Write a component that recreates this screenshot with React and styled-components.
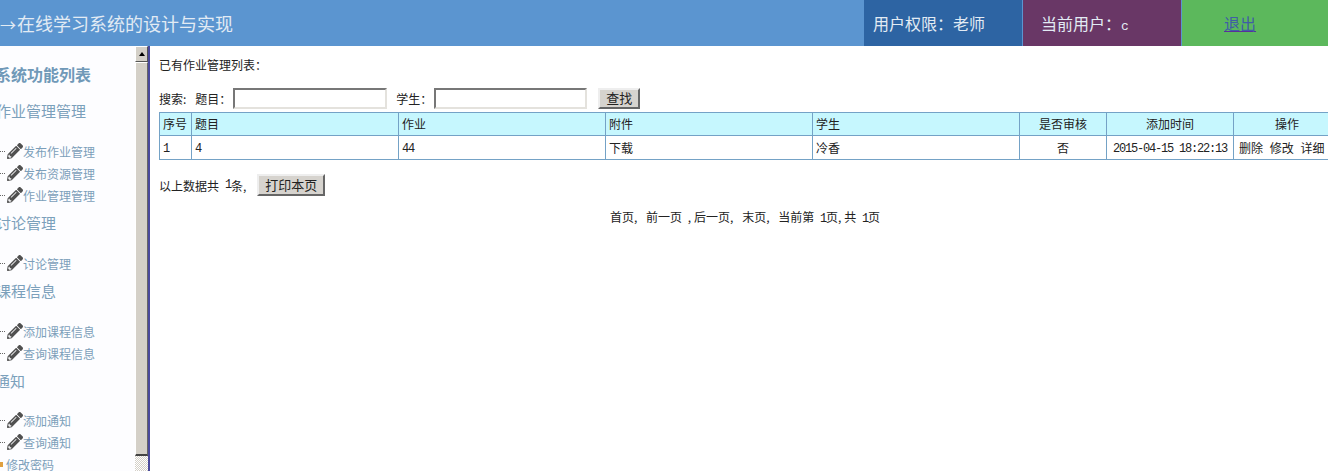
import styled, { createGlobalStyle } from 'styled-components';
import { FaPencilAlt } from 'react-icons/fa';

const CJK = '"Noto Sans CJK SC", "Liberation Sans", sans-serif';

const Global = createGlobalStyle`
   html, body {
      margin: 0;
      padding: 0;
      height: 100%;
      overflow: hidden;
      background: #fff;
      font-family: ${CJK};
   }
`;

const Page = styled.div`
   width: 1328px;
   height: 471px;
   overflow: hidden;
   display: flex;
   flex-direction: column;
`;

const Header = styled.header`
   height: 46px;
   flex: none;
   display: flex;
   background: #5b95d0;
   color: #e2ebf4;
   font-size: 16px;
   line-height: 46px;
`;

const Title = styled.div`
   flex: 1;
   font-size: 18px;
   white-space: nowrap;
`;

const Arrow = styled.span`
   display: inline-block;
   width: 17px;
   font-size: 16px;
`;

const HeaderCell = styled.div`
   width: ${props => props.width}px;
   background: ${props => props.bg};
   padding-left: ${props => props.pad}px;
   box-sizing: border-box;
   margin-left: ${props => props.gap || 0}px;
   white-space: nowrap;
`;

const Logout = styled.a`
   color: #3f5ea6;
   text-decoration: underline;
   text-decoration-color: #5a2f9a;
`;

const UserName = styled.span`
   font-family: "Liberation Mono", monospace;
   font-size: 13px;
`;

const Body = styled.div`
   flex: 1;
   display: flex;
   min-height: 0;
`;

const Side = styled.aside`
   width: 135px;
   flex: none;
   overflow: hidden;
   background: #fdfdff;
   color: #7c9fba;
   font-size: 12px;
   padding-top: 17px;
   box-sizing: border-box;
`;

const SideTitle = styled.div`
   font-size: 16px;
   line-height: 22px;
   font-weight: 700;
   margin-left: -5px;
   color: #7099b8;
   white-space: nowrap;
`;

const SideHead = styled.div`
   font-size: 15px;
   line-height: 22px;
   margin: ${props => props.top}px 0 ${props => props.bottom || 18}px ${props => props.left}px;
   color: #7ba0bb;
   white-space: nowrap;
`;

const SideItem = styled.div`
   height: 22px;
   display: flex;
   align-items: center;
   white-space: nowrap;
`;

const TreeDots = styled.span`
   width: 5px;
   margin-right: 2px;
   border-top: 1px dotted #666;
`;

const Pencil = styled(FaPencilAlt)`
   width: 16px;
   height: 16px;
   color: #505050;
   flex: none;
`;

const KeyMark = styled.span`
   width: 3px;
   height: 5px;
   margin-right: 3px;
   background: #e0a040;
`;

const Scrollbar = styled.div`
   width: 13px;
   flex: none;
   display: flex;
   flex-direction: column;
   background: #d4d0c8;
   border-right: 2px solid #4a4a9c;
`;

const ScrollButton = styled.div`
   height: 16px;
   display: flex;
   align-items: center;
   justify-content: center;
   background: #d4d0c8;
   border-top: 1px solid #fff;
   border-left: 1px solid #fff;
   border-right: 1px solid #555;
   border-bottom: 1px solid #555;
   box-sizing: border-box;
`;

const ScrollArrow = styled.span`
   width: 0;
   height: 0;
   border-left: 3px solid transparent;
   border-right: 3px solid transparent;
   border-bottom: 4px solid #000;
`;

const ScrollThumb = styled.div`
   height: 394px;
   background: #d4d0c8;
   border-top: 1px solid #fff;
   border-left: 1px solid #fff;
   border-right: 1px solid #666;
   border-bottom: 2px solid #444;
   box-sizing: border-box;
`;

const ScrollTrack = styled.div`
   flex: 1;
   background: repeating-conic-gradient(#fff 0 25%, #d4d0c8 0 50%) 0 0 / 2px 2px;
`;

const Main = styled.main`
   width: 1181px;
   flex: none;
   padding-left: 9px;
   font-size: 12px;
   color: #222;
`;

const Heading = styled.div`
   height: 17px;
   line-height: 17px;
   margin-top: 10px;
`;

const SearchRow = styled.form`
   height: 21px;
   margin: 15px 0 3px;
   display: flex;
   align-items: center;
   white-space: nowrap;
`;

const Label = styled.span`
   margin-right: ${props => props.right || 0}px;
   margin-left: ${props => props.left || 0}px;
`;

const Field = styled.input`
   width: ${props => props.width}px;
   height: 21px;
   box-sizing: border-box;
   padding: 0;
   background: #fff;
   border: 2px solid;
   border-color: #777 #e4e2dd #e4e2dd #777;
`;

const PlainButton = styled.button`
   width: ${props => props.width}px;
   height: ${props => props.height || 21}px;
   margin-left: ${props => props.left}px;
   padding: 0 0 2px;
   font-family: ${CJK};
   font-size: 13px;
   line-height: 13px;
   color: #222;
   background: #d6d3ce;
   border: 2px solid;
   border-color: #eee #666 #666 #eee;
`;

const Table = styled.table`
   width: 1181px;
   table-layout: fixed;
   border-collapse: collapse;
   font-size: 12px;

   td, th {
      height: 24px;
      padding: 0 0 1px 3px;
      box-sizing: border-box;
      border: 1px solid #74a2c6;
      font-weight: normal;
      text-align: left;
      white-space: nowrap;
      overflow: hidden;
   }

   th {
      height: 23px;
      background: #c6f7fe;
   }

   .center {
      text-align: center;
      padding: 0 0 1px;
   }

   .actions {
      padding-left: 5px;
      word-spacing: 4px;
   }
`;

const Latin = styled.span`
   font-family: "Liberation Mono", monospace;
   letter-spacing: -1.2px;
`;

const Comma = styled.span`
   margin-right: 3px;
`;

const Summary = styled.div`
   height: 22px;
   margin-top: 14px;
   display: flex;
   align-items: center;
   white-space: nowrap;
`;

const Pager = styled.div`
   margin: 12px 0 0 -9px;
   text-align: center;
   line-height: 17px;
   white-space: pre;
   word-spacing: 3px;
`;

const columns = [32, 207, 207, 207, 207, 87, 127, 107];

const Item = ({ children }) => (
   <SideItem>
      <TreeDots />
      <Pencil />
      {children}
   </SideItem>
);

const App = () => {
   return (
      <Page>
         <Global />
         <Header>
            <Title><Arrow>→</Arrow>在线学习系统的设计与实现</Title>
            <HeaderCell width={158} bg="#2d64a3" pad={9}>用户权限：老师</HeaderCell>
            <HeaderCell width={158} bg="#693766" pad={18} gap={1}>当前用户：<UserName>c</UserName></HeaderCell>
            <HeaderCell width={146} bg="#5cb85c" pad={42} gap={1}><Logout href="#">退出</Logout></HeaderCell>
         </Header>

         <Body>
            <Side>
               <SideTitle>系统功能列表</SideTitle>
               <SideHead top={15} left={-4}>作业管理管理</SideHead>
               <Item>发布作业管理</Item>
               <Item>发布资源管理</Item>
               <Item>作业管理管理</Item>
               <SideHead top={6} left={-4}>讨论管理</SideHead>
               <Item>讨论管理</Item>
               <SideHead top={6} left={-4}>课程信息</SideHead>
               <Item>添加课程信息</Item>
               <Item>查询课程信息</Item>
               <SideHead top={6} bottom={17} left={-5}>通知</SideHead>
               <Item>添加通知</Item>
               <Item>查询通知</Item>
               <SideItem><KeyMark />修改密码</SideItem>
            </Side>

            <Scrollbar>
               <ScrollButton><ScrollArrow /></ScrollButton>
               <ScrollThumb />
               <ScrollTrack />
            </Scrollbar>

            <Main>
               <Heading>已有作业管理列表：</Heading>
               <SearchRow>
                  <Label right={9}>搜索:</Label>
                  <Label right={2}>题目：</Label>
                  <Field width={154} />
                  <Label left={9} right={2}>学生：</Label>
                  <Field width={153} />
                  <PlainButton type="button" width={42} left={11}>查找</PlainButton>
               </SearchRow>
               <Table>
                  <colgroup>
                     {columns.map((w, i) => <col key={i} style={{ width: w }} />)}
                  </colgroup>
                  <thead>
                     <tr>
                        <th>序号</th>
                        <th>题目</th>
                        <th>作业</th>
                        <th>附件</th>
                        <th>学生</th>
                        <th className="center">是否审核</th>
                        <th className="center">添加时间</th>
                        <th className="center">操作</th>
                     </tr>
                  </thead>
                  <tbody>
                     <tr>
                        <td><Latin>1</Latin></td>
                        <td><Latin>4</Latin></td>
                        <td><Latin>44</Latin></td>
                        <td>下载</td>
                        <td>冷香</td>
                        <td className="center">否</td>
                        <td className="center"><Latin>2015-04-15 18:22:13</Latin></td>
                        <td className="actions">删除 修改 详细</td>
                     </tr>
                  </tbody>
               </Table>
               <Summary>
                  以上数据共 <Latin>&nbsp;1</Latin>条,
                  <PlainButton type="button" width={68} height={22} left={11}>打印本页</PlainButton>
               </Summary>
               <Pager>首页<Comma>,</Comma> 前一页 <Comma>,</Comma>后一页<Comma>,</Comma> 末页<Comma>,</Comma> 当前第 <Latin>1</Latin>页<Comma>,</Comma>共 <Latin>1</Latin>页</Pager>
            </Main>
         </Body>
      </Page>
   );
};

export default App;
